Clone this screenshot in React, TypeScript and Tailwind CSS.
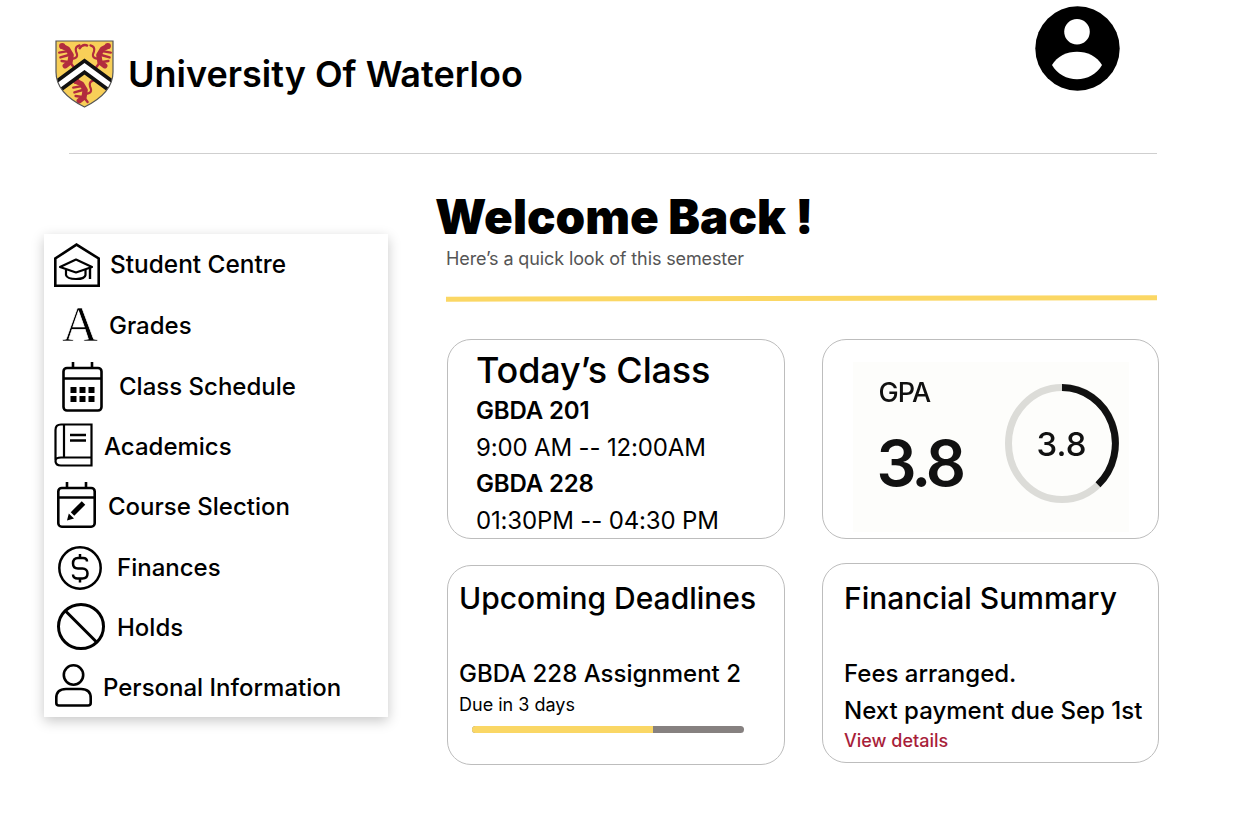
import React from 'react';

function Lion({ x, y, flip }: { x: number; y: number; flip?: boolean }) {
  return (
    <g transform={`translate(${x} ${y}) scale(1.2)${flip ? ' scale(-1 1) translate(-20 0)' : ''}`} fill="none" stroke="#b22b3e" strokeLinecap="round" strokeLinejoin="round">
      <path d="M4 3 L8 5 L11 10 L10 16 L6 19" strokeWidth="4.4" />
      <circle cx="3.5" cy="2.5" r="2.6" fill="#b22b3e" strokeWidth="0" />
      <path d="M7 7 L1 8 M9 10 L2 12 M10 16 L3 15 M10 16 L13 20" strokeWidth="2" />
      <path d="M11 13 Q18 13 15 7 Q14 3 18 2" strokeWidth="1.8" />
    </g>
  );
}

function Crest() {
  return (
    <svg width="59" height="68" viewBox="0 0 59 68" className="shrink-0">
      <defs>
        <clipPath id="shield">
          <path d="M1 1 H58 V32 Q58 53 29.5 67 Q1 53 1 32 Z" />
        </clipPath>
      </defs>
      <path d="M1 1 H58 V32 Q58 53 29.5 67 Q1 53 1 32 Z" fill="#f8cf58" />
      <Lion x={3} y={3} />
      <Lion x={33} y={3} flip />
      <Lion x={17} y={38} />
      <path d="M24 9 Q28 3 33 6" fill="none" stroke="#b22b3e" strokeWidth="2.4" />
      <g clipPath="url(#shield)">
        <polyline points="3,46 29.5,26.5 56,46" fill="none" stroke="#111" strokeWidth="13" strokeLinejoin="miter" />
        <polyline points="3,46 29.5,26.5 56,46" fill="none" stroke="#fff" strokeWidth="5.5" strokeLinejoin="miter" />
      </g>
      <path d="M1 1 H58 V32 Q58 53 29.5 67 Q1 53 1 32 Z" fill="none" stroke="#555" strokeWidth="1.2" />
    </svg>
  );
}

function HouseIcon() {
  return (
    <svg width="46" height="44" viewBox="0 0 46 44" fill="none" stroke="#000" strokeWidth="2.6" className="shrink-0">
      <path d="M1.3 42.7 V15.5 L22.5 1.6 L44.7 15.5 V42.7 Z" />
      <path d="M6 24 L22 16.5 L38 24 L22 29.5 Z" strokeWidth="2.2" strokeLinejoin="round" />
      <path d="M12 27 V32 Q13 36 22 36 Q31 36 31.5 32 V27" strokeWidth="2.2" />
      <path d="M36 25 V36" strokeWidth="2.4" />
    </svg>
  );
}

function CalendarIcon() {
  return (
    <svg width="41" height="50" viewBox="0 0 41 50" fill="none" stroke="#000" strokeWidth="2.6" className="shrink-0">
      <rect x="1.5" y="6" width="38" height="42.5" rx="3.5" />
      <path d="M1.5 16.5 H39.5 M11 0 V6 M30 0 V6" />
      <g fill="#000" stroke="none">
        <rect x="8.5" y="25" width="6" height="6" />
        <rect x="17.5" y="25" width="6" height="6" />
        <rect x="26.5" y="25" width="6" height="6" />
        <rect x="8.5" y="34" width="6" height="6" />
        <rect x="17.5" y="34" width="6" height="6" />
        <rect x="26.5" y="34" width="6" height="6" />
      </g>
    </svg>
  );
}

function BookIcon() {
  return (
    <svg width="39" height="44" viewBox="0 0 39 44" fill="none" stroke="#000" strokeWidth="2.2" className="shrink-0 -mt-[4px]">
      <path d="M1.5 37 V7 Q1.5 1.5 7 1.5 H37.5 V34.5 H7 Q1.5 34.5 1.5 38 Q1.5 42.5 7 42.5 H37.5 V35" />
      <path d="M10 1.5 V34.5" />
      <path d="M16 12 H32 M16 17.5 H32" strokeWidth="2.4" />
    </svg>
  );
}

function CalendarEditIcon() {
  return (
    <svg width="39" height="46" viewBox="0 0 39 46" fill="none" stroke="#000" strokeWidth="2.6" className="shrink-0 -mt-[4px]">
      <rect x="1.3" y="6" width="36.4" height="38.7" rx="3.5" />
      <path d="M1.3 15.5 H37.7 M10 0 V6 M29 0 V6" />
      <path d="M15.5 32 L26.5 21" strokeWidth="5" />
      <path d="M10 38.5 L11.8 31.5 L17 36.5 Z" fill="#000" stroke="none" />
    </svg>
  );
}

function DollarIcon() {
  return (
    <svg width="44" height="44" viewBox="0 0 44 44" fill="none" stroke="#000" strokeWidth="2.5" className="shrink-0">
      <circle cx="22" cy="22" r="20.7" />
      <path d="M29 15.5 C29 13 27 12 25 12 H20 C17 12 15 14 15 17.5 C15 21 17 22.5 20 22.5 H24.5 C27.5 22.5 29.5 24.5 29.5 27.5 C29.5 31 27.5 32.5 24.5 32.5 H19.5 C17 32.5 15 31 15 28.5" />
      <path d="M22 8 V12 M22 32.5 V36.5" />
    </svg>
  );
}

function BanIcon() {
  return (
    <svg width="48" height="47" viewBox="0 0 48 47" fill="none" stroke="#000" strokeWidth="3" className="shrink-0 -mt-[3px]">
      <ellipse cx="24" cy="23.5" rx="22.5" ry="22" />
      <path d="M8.5 8 L39.5 39" />
    </svg>
  );
}

function PersonIcon() {
  return (
    <svg width="37" height="43" viewBox="0 0 37 43" fill="none" stroke="#000" strokeWidth="2.6" className="shrink-0 -mt-[5px]">
      <circle cx="18.5" cy="11" r="9.7" />
      <path d="M4 41.5 H33 Q35.7 41.5 35.7 39 V34 Q35.7 25 26 25 H11 Q1.3 25 1.3 34 V39 Q1.3 41.5 4 41.5 Z" />
    </svg>
  );
}

export default function App() {
  return (
    <div className="w-[1236px] h-[826px] bg-white text-black overflow-hidden font-['Inter',sans-serif]">
      <header className="h-[153px] flex items-start justify-between pl-[55px] pr-[116px]">
        <div className="flex items-center gap-[14px] mt-[40px]">
          <Crest />
          <h1 className="text-[36px] leading-[44px] font-semibold">University Of Waterloo</h1>
        </div>
        <svg width="85" height="85" viewBox="0 0 85 85" className="mt-[6px] shrink-0">
          <circle cx="42.5" cy="42.5" r="42.2" fill="#000" />
          <circle cx="42" cy="25.7" r="12.8" fill="#fff" />
          <path d="M17 59 C22 50 32 45.7 42 45.7 C52 45.7 62 50 67 59 C62 68 52 73.3 42 73.3 C32 73.3 22 68 17 59 Z" fill="#fff" />
        </svg>
      </header>
      <div className="ml-[69px] w-[1088px] h-px bg-[#cfcfcf]" />

      <div className="flex pl-[44px]">
        <nav className="mt-[80px] w-[344px] h-[483px] flex flex-col bg-white shadow-[0_4px_12px_rgba(0,0,0,0.22)] text-[24px] font-medium">
          <div className="h-[61px] flex items-center pl-[10px] gap-[10px]"><HouseIcon /><span className="text-[24.4px]">Student Centre</span></div>
          <div className="h-[61px] flex items-center pl-[18px] gap-[14px]">
            <span className="w-[33px] text-[50px] leading-[50px] font-normal font-['Liberation_Serif',serif] -mt-[4px] [-webkit-text-stroke:0.7px_white]">A</span>
            Grades
          </div>
          <div className="h-[61px] flex items-center pl-[18px] gap-[16px]"><CalendarIcon />Class Schedule</div>
          <div className="h-[60px] flex items-center pl-[10px] gap-[11px]"><BookIcon />Academics</div>
          <div className="h-[60px] flex items-center pl-[13px] gap-[12px]"><CalendarEditIcon />Course Slection</div>
          <div className="h-[61px] flex items-center pl-[14px] gap-[15px]"><DollarIcon />Finances</div>
          <div className="h-[59px] flex items-center pl-[13px] gap-[12px]"><BanIcon />Holds</div>
          <div className="h-[60px] flex items-center pl-[11px] gap-[11px] pt-[2px]"><PersonIcon />Personal Information</div>
        </nav>

        <main className="ml-[48px] mt-[34px]">
          <h2 className="text-[47.5px] leading-[58px] font-black -ml-[1px]">Welcome Back !</h2>
          <p className="ml-[10px] mt-[2px] text-[18px] leading-[22px] text-[#555] tracking-[-0.12px]">Here’s a quick look of this semester</p>
          <div className="ml-[10px] mt-[26px] w-[711px] h-[5px] bg-[#fbd764] -rotate-[0.12deg]" />

          <div className="ml-[11px] mt-[38px] flex gap-[37px]">
            <div className="w-[338px] flex flex-col gap-[26px]">
              <section className="h-[200px] rounded-[24px] border border-[#bdbdbd] pl-[28px] pt-[8px] text-[24px] leading-[36.5px] tracking-[-0.15px]">
                <h3 className="text-[36px] leading-[44px] font-medium">Today’s Class</h3>
                <p className="font-semibold mt-[1px]">GBDA 201</p>
                <p>9:00 AM -- 12:00AM</p>
                <p className="font-semibold">GBDA 228</p>
                <p>01:30PM -- 04:30 PM</p>
              </section>
              <section className="h-[200px] rounded-[24px] border border-[#bdbdbd] pl-[11px] pt-[14px]">
                <h3 className="text-[30px] leading-[36px] font-medium">Upcoming Deadlines</h3>
                <p className="mt-[43px] text-[24px] leading-[30px] font-medium">GBDA 228 Assignment 2</p>
                <p className="mt-[5px] text-[18px] leading-[22px]">Due in 3 days</p>
                <div className="ml-[13px] mt-[10px] w-[272px] h-[7px] rounded-full overflow-hidden flex bg-[#868180]">
                  <div className="w-[181px] bg-[#fad765]" />
                </div>
              </section>
            </div>

            <div className="w-[337px] flex flex-col gap-[24px]">
              <section className="h-[200px] rounded-[24px] border border-[#bdbdbd] flex items-center justify-center">
                <div className="w-[276px] h-[170px] mt-[16px] bg-[#fdfdfb] flex blur-[0.4px] text-[#111]">
                  <div className="w-[152px] pl-[26px] pt-[15px]">
                    <p className="text-[27px] leading-[32px] tracking-[-1px] font-medium">GPA</p>
                    <p className="mt-[16px] -ml-[2px] text-[63px] leading-[76px] font-semibold tracking-[-4px]">3.8</p>
                  </div>
                  <div className="relative mt-[22px] w-[114px] h-[119px]">
                    <svg width="114" height="119" viewBox="0 0 114 119" fill="none" strokeWidth="7">
                      <ellipse cx="57" cy="59.5" rx="53.5" ry="56" stroke="#dcdcd8" />
                      <path d="M57 3.5 A53.5 56 0 0 1 93 100.8" stroke="#111" />
                    </svg>
                    <span className="absolute inset-0 pt-[1px] flex items-center justify-center text-[33px] leading-none font-medium">3.8</span>
                  </div>
                </div>
              </section>
              <section className="h-[200px] rounded-[24px] border border-[#bdbdbd] pl-[21px] pt-[16px]">
                <h3 className="text-[30px] leading-[36px] font-medium">Financial Summary</h3>
                <p className="mt-[43px] text-[24px] leading-[30px] font-medium">Fees arranged.</p>
                <p className="mt-[7px] text-[24px] leading-[30px] font-medium">Next payment due Sep 1st</p>
                <p className="mt-[4px] text-[18px] leading-[22px] font-medium text-[#a81e3a]">View details</p>
              </section>
            </div>
          </div>
        </main>
      </div>
    </div>
  );
}
